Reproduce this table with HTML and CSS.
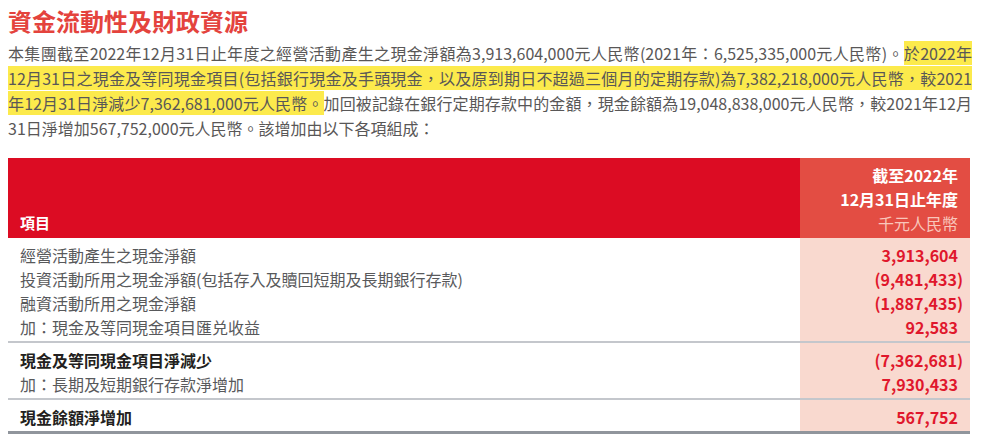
FILE: index.html
```html
<!DOCTYPE html>
<html lang="zh-Hant">
<head>
  <meta charset="UTF-8">
  <meta name="viewport" content="width=device-width, initial-scale=1.0">
  <title>資金流動性及財政資源</title>
  <link rel="stylesheet" href="styles.css">
</head>
<body>

<main class="page">
  <h1 class="title">資金流動性及財政資源</h1>

  <div class="para">
    <div class="line">本集團截至2022年12月31日止年度之經營活動產生之現金淨額為3,913,604,000元人民幣(2021年：6,525,335,000元人民幣)。<span class="mark">於2022年</span></div>
    <div class="line"><span class="mark">12月31日之現金及等同現金項目(包括銀行現金及手頭現金，以及原到期日不超過三個月的定期存款)為7,382,218,000元人民幣，較2021</span></div>
    <div class="line"><span class="mark">年12月31日淨減少7,362,681,000元人民幣。</span>加回被記錄在銀行定期存款中的金額，現金餘額為19,048,838,000元人民幣，較2021年12月</div>
    <div class="line last">31日淨增加567,752,000元人民幣。該增加由以下各項組成：</div>
  </div>

  <table class="cash">
    <thead>
      <tr>
        <th class="item">項目</th>
        <th class="amt">截至2022年<br>12月31日止年度<br><span class="unit">千元人民幣</span></th>
      </tr>
    </thead>
    <tbody>
      <tr class="first"><td>經營活動產生之現金淨額</td><td class="num">3,913,604</td></tr>
      <tr><td>投資活動所用之現金淨額(包括存入及贖回短期及長期銀行存款)</td><td class="num">(9,481,433<span class="cp">)</span></td></tr>
      <tr><td>融資活動所用之現金淨額</td><td class="num">(1,887,435<span class="cp">)</span></td></tr>
      <tr class="end"><td>加：現金及等同現金項目匯兑收益</td><td class="num">92,583</td></tr>
    </tbody>
    <tbody>
      <tr class="first"><td class="strong">現金及等同現金項目淨減少</td><td class="num">(7,362,681<span class="cp">)</span></td></tr>
      <tr class="end"><td>加：長期及短期銀行存款淨增加</td><td class="num">7,930,433</td></tr>
    </tbody>
    <tbody class="total">
      <tr class="first end"><td class="strong">現金餘額淨增加</td><td class="num">567,752</td></tr>
    </tbody>
  </table>
</main>

</body>
</html>
```

FILE: styles.css
```css
body { margin: 0; padding: 0; background: #fff; font-family: "Noto Sans CJK TC", "Noto Sans", sans-serif; color: #595757; }
.page { width: 964px; padding: 5px 8px 0; }

.title { margin: 0; font-size: 24px; line-height: 32px; font-weight: 700; color: #e4433d; }

.para { margin-top: 4px; font-size: 16px; line-height: 25px; }
.para .line { white-space: nowrap; text-align: justify; text-align-last: justify; }
.para .line.last { text-align-last: left; }
.mark { background: #fcea4c; }

.cash { width: 962px; margin-top: 17px; border-collapse: collapse; font-size: 16px; line-height: 24px; }
.cash th { padding: 0 12px; color: #fff; font-weight: 700; }
.cash th.item { background: #dc0c23; text-align: left; vertical-align: bottom; padding-bottom: 3px; font-size: 15px; }
.cash th.amt { width: 146px; background: #e34d43; text-align: right; padding-top: 5px; padding-bottom: 3px; }
.cash th .unit { font-weight: 400; color: #f9c6bb; }

.cash td { padding: 0 12px; color: #58595b; }
.cash td.strong { font-weight: 700; color: #231f20; }
.cash td.num { background: #f9d9cf; text-align: right; font-weight: 700; color: #e0172c; }
.cash .cp { margin-right: -5px; }
.cash tr.first td { padding-top: 5px; }
.cash tr.end td { padding-bottom: 2px; }
.cash tbody { border-bottom: 2px solid #c4c7cc; }
.cash tbody.total { border-bottom: 3px solid #90959c; }
```
